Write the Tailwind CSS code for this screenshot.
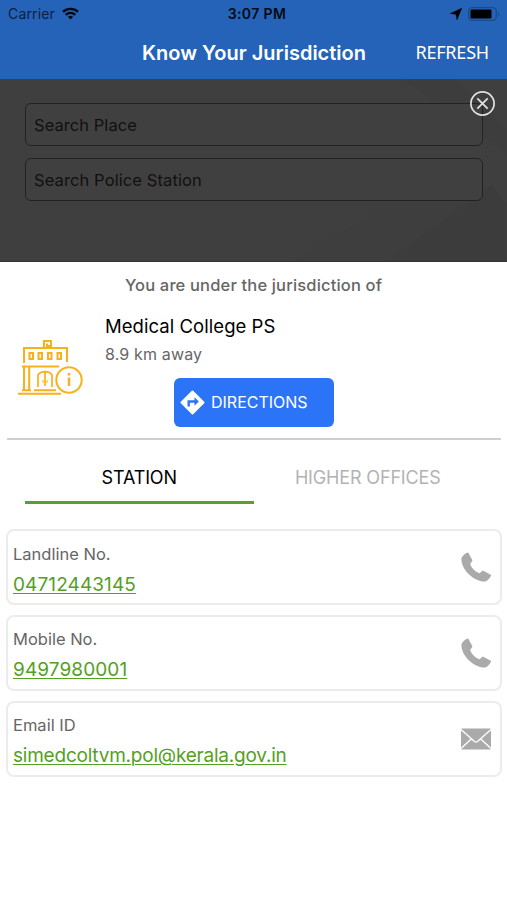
<!DOCTYPE html>
<html lang="en">
  <head>
    <meta charset="UTF-8" />
    <meta name="viewport" content="width=device-width, initial-scale=1.0" />
    <title>Know Your Jurisdiction</title>
    <script src="https://cdn.jsdelivr.net/npm/@tailwindcss/browser@4"></script>
  </head>

  <body class="bg-white font-['Inter',sans-serif] text-black">
    <div class="w-[507px] h-[900px] overflow-hidden flex flex-col">
      <header class="h-[79px] bg-[#2563b8] shrink-0">
        <!-- Status bar -->
        <div class="grid grid-cols-[1fr_66px_1fr] items-center h-[27px] pl-2 pr-[7px] text-[#0a1f40]">
          <div class="flex items-center gap-[7px]">
            <span class="text-[14px] tracking-[0.15px]">Carrier</span>
            <svg class="w-[17px] h-[13px]" viewBox="0 0 17 13" fill="none" stroke="#040a14" stroke-width="2.3">
              <path d="M1 4.8C5.200 .9 11.800 .9 16 4.800" />
              <path d="M3.700 7.800c2.700-2.500 6.900-2.500 9.600 0" />
              <path d="M8.500 12.500 5.900 9.800c1.500-1.300 3.700-1.300 5.200 0z" fill="#040a14" stroke="none" />
            </svg>
          </div>
          <span class="pl-[6px] text-[14px] font-semibold text-center whitespace-nowrap tracking-[0.4px] text-[#040a14]">3:07 PM</span>
          <div class="flex items-center justify-end gap-[6px] text-black">
            <svg class="w-3 h-3" viewBox="0 0 12 12" fill="currentColor">
              <path d="M11.700.3 7 11.700 6 6.300.3 5.500z" stroke="currentColor" stroke-width=".5" />
            </svg>
            <svg class="w-8 h-[14px]" viewBox="0 0 32 14">
              <rect x=".7" y=".7" width="27.600" height="12.600" rx="3.500" fill="none" stroke="#184b8e" stroke-width="1.300" />
              <rect x="2.500" y="2.500" width="21" height="9" rx="1.200" fill="currentColor" />
              <path d="M30 4.500c1.600.8 1.600 4.200 0 5z" fill="#184b8e" />
            </svg>
          </div>
        </div>
        <!-- Title bar -->
        <div class="grid grid-cols-[1fr_226px_1fr] items-center h-[51px] pr-[18px] pl-[19px] text-white">
          <span></span>
          <h1 class="text-[20px] font-semibold text-center whitespace-nowrap">Know Your Jurisdiction</h1>
          <button class="justify-self-end font-['Noto_Sans',sans-serif] text-[18px] tracking-[-0.2px]">REFRESH</button>
        </div>
      </header>

      <!-- Dimmed search area -->
      <section class="relative h-[183px] shrink-0 bg-[#3f3f3f] border-b border-[#333333] px-[25px] pt-6">
        <svg class="absolute inset-0 w-full h-full" viewBox="0 0 507 183">
          <path d="M295 183 397 122 455 87 507 140v43z" fill="#3e3e3e" />
          <path d="M388 183 493 106l14 20v57z" fill="#3c3c3c" />
          <path d="M403 0h55l49 50v25z" fill="#3d3d3d" />
        </svg>
        <div class="relative flex flex-col gap-3 text-[16.5px] text-[#101010]">
          <div class="h-[43px] w-[458px] rounded-md border-[1.5px] border-[#222222] bg-[#404040] flex items-center px-2 pt-px tracking-[0.05px]">Search Place</div>
          <div class="h-[43px] w-[458px] rounded-md border-[1.5px] border-[#222222] bg-[#404040] flex items-center px-2 pt-px tracking-[0.1px]">Search Police Station</div>
        </div>
        <button class="absolute top-[11px] right-[11px] w-[27px] h-[27px]" aria-label="Close">
          <svg viewBox="0 0 27 27" fill="none" stroke="#e2e2e2" stroke-width="1.700">
            <circle cx="13.500" cy="13.500" r="11.600" />
            <path d="m8.300 8.300 10.400 10.400M18.700 8.300 8.300 18.700" />
          </svg>
        </button>
      </section>

      <main class="flex flex-col">
        <p class="h-[46px] flex items-center justify-center text-[16.5px] tracking-[0.16px] font-medium text-[#666666]">You are under the jurisdiction of</p>
        <div class="flex h-[132px] ml-[7px] mr-[6px] border-b-2 border-[#cfcfcf]">
          <svg class="w-[67px] h-[58px] mt-[31px] ml-[10px] shrink-0" viewBox="0 0 67 58" fill="none" stroke="#fab01c" stroke-width="2">
            <path d="M7 24V9h43v14M27 9V2h7v5h-4V4.500" />
            <path d="M12.500 14h3.500v6h-3.500zM21.500 14h3.500v6h-3.500zM31 14h3.500v6h-3.500zM40.500 14h3.500v6h-3.500z" />
            <path d="M5 27.500h37M7 28v23M12.200 28v23" />
            <path d="M21 48V36c3-4.500 11.500-4.500 14 0v12M28 33v14" stroke-width="1.700" />
            <path d="M26 41v3M30 41v3" stroke-width="1" />
            <path d="M5 51.300h9M17 51.300h22M1 54.800h43" />
            <circle cx="52" cy="41" r="12.700" />
            <path d="M52 38.500v8.500M52 34v2.500" stroke-width="2.500" />
          </svg>
          <div class="ml-[21px] flex flex-col">
            <h2 class="text-[18.500px] leading-7 mt-1 tracking-[0.05px]">Medical College PS</h2>
            <p class="text-[16px] leading-7 tracking-[0.15px] text-[#666666]">8.9 km away</p>
            <button class="mt-[10px] ml-[69px] w-[160px] h-[49px] rounded-md bg-[#2b74f8] text-white flex items-center gap-[6px] pl-[6px] text-[16px]">
              <svg class="w-[25px] h-[25px]" viewBox="0 0 25 25">
                <path d="M12.500 1.500 23.500 12.500 12.500 23.500 1.500 12.500z" fill="#fff" stroke="#fff" stroke-width="2" stroke-linejoin="round" />
                <path d="M7.500 16.500v-6.300h7V7.300l4.300 4.200-4.300 4.200v-3h-4.600v3.800z" fill="#2b74f8" />
              </svg>
              <span class="pb-px">DIRECTIONS</span>
            </button>
          </div>
        </div>

        <!-- Tabs -->
        <nav class="grid grid-cols-2 mx-[25px] h-[64px] text-[18px] tracking-[-0.15px]">
          <button class="border-b-[3px] border-[#5b9f34] pt-[13px]">STATION</button>
          <button class="border-b-[3px] border-transparent pt-[13px] text-[#b3b3b3]">HIGHER OFFICES</button>
        </nav>

        <div class="flex flex-col gap-[10px] mt-[25px] ml-[6px] mr-[5px]">
          <div class="h-[76px] rounded-lg border-2 border-[#ececec] flex items-center justify-between pl-[5px] pr-2">
            <div class="flex flex-col pt-[5px]">
              <span class="text-[16.5px] leading-[30px] text-[#666666]">Landline No.</span>
              <a class="text-[19px] leading-8 tracking-[0.1px] text-[#54a023] underline underline-offset-2 decoration-1">04712443145</a>
            </div>
            <svg class="w-8 h-8" viewBox="0 0 32 32" fill="#aaaaaa">
              <path d="M8.200 1.500 12.500 9.500 10.200 13c1.200 4 5 7.800 9.300 9.200l3.300-2.700 8.400 4.500c-.7 2.600-3.800 6-6.300 6.500C14.500 31 1.200 19 1.400 8c0-2.600 4.100-6 6.800-6.500z" />
            </svg>
          </div>
          <div class="h-[76px] rounded-lg border-2 border-[#ececec] flex items-center justify-between pl-[5px] pr-2">
            <div class="flex flex-col pt-1">
              <span class="text-[16.5px] leading-[30px] text-[#666666]">Mobile No.</span>
              <a class="text-[19px] leading-8 tracking-[0.1px] text-[#54a023] underline underline-offset-2 decoration-1">9497980001</a>
            </div>
            <svg class="w-8 h-8" viewBox="0 0 32 32" fill="#aaaaaa">
              <path d="M8.200 1.500 12.500 9.500 10.200 13c1.200 4 5 7.800 9.300 9.200l3.300-2.700 8.400 4.500c-.7 2.600-3.800 6-6.300 6.500C14.500 31 1.200 19 1.400 8c0-2.600 4.100-6 6.800-6.500z" />
            </svg>
          </div>
          <div class="h-[76px] rounded-lg border-2 border-[#ececec] flex items-center justify-between pl-[5px] pr-2">
            <div class="flex flex-col pt-[3px]">
              <span class="text-[16.5px] leading-[30px] text-[#666666]">Email ID</span>
              <a class="text-[19px] leading-8 tracking-[-0.22px] text-[#54a023] underline underline-offset-2 decoration-1">simedcoltvm.pol@kerala.gov.in</a>
            </div>
            <svg class="w-8 h-[22px]" viewBox="0 0 32 22">
              <rect x="1" y=".5" width="30" height="21" rx="1" fill="#aaaaaa" />
              <path d="m1 1.500 13.500 12q1.500 1.200 3 0L31 1.500M1 20.500l10.500-9.700M31 20.500l-10.500-9.700" fill="none" stroke="#fff" stroke-width="1.400" />
            </svg>
          </div>
        </div>
      </main>
    </div>
  </body>
</html>
